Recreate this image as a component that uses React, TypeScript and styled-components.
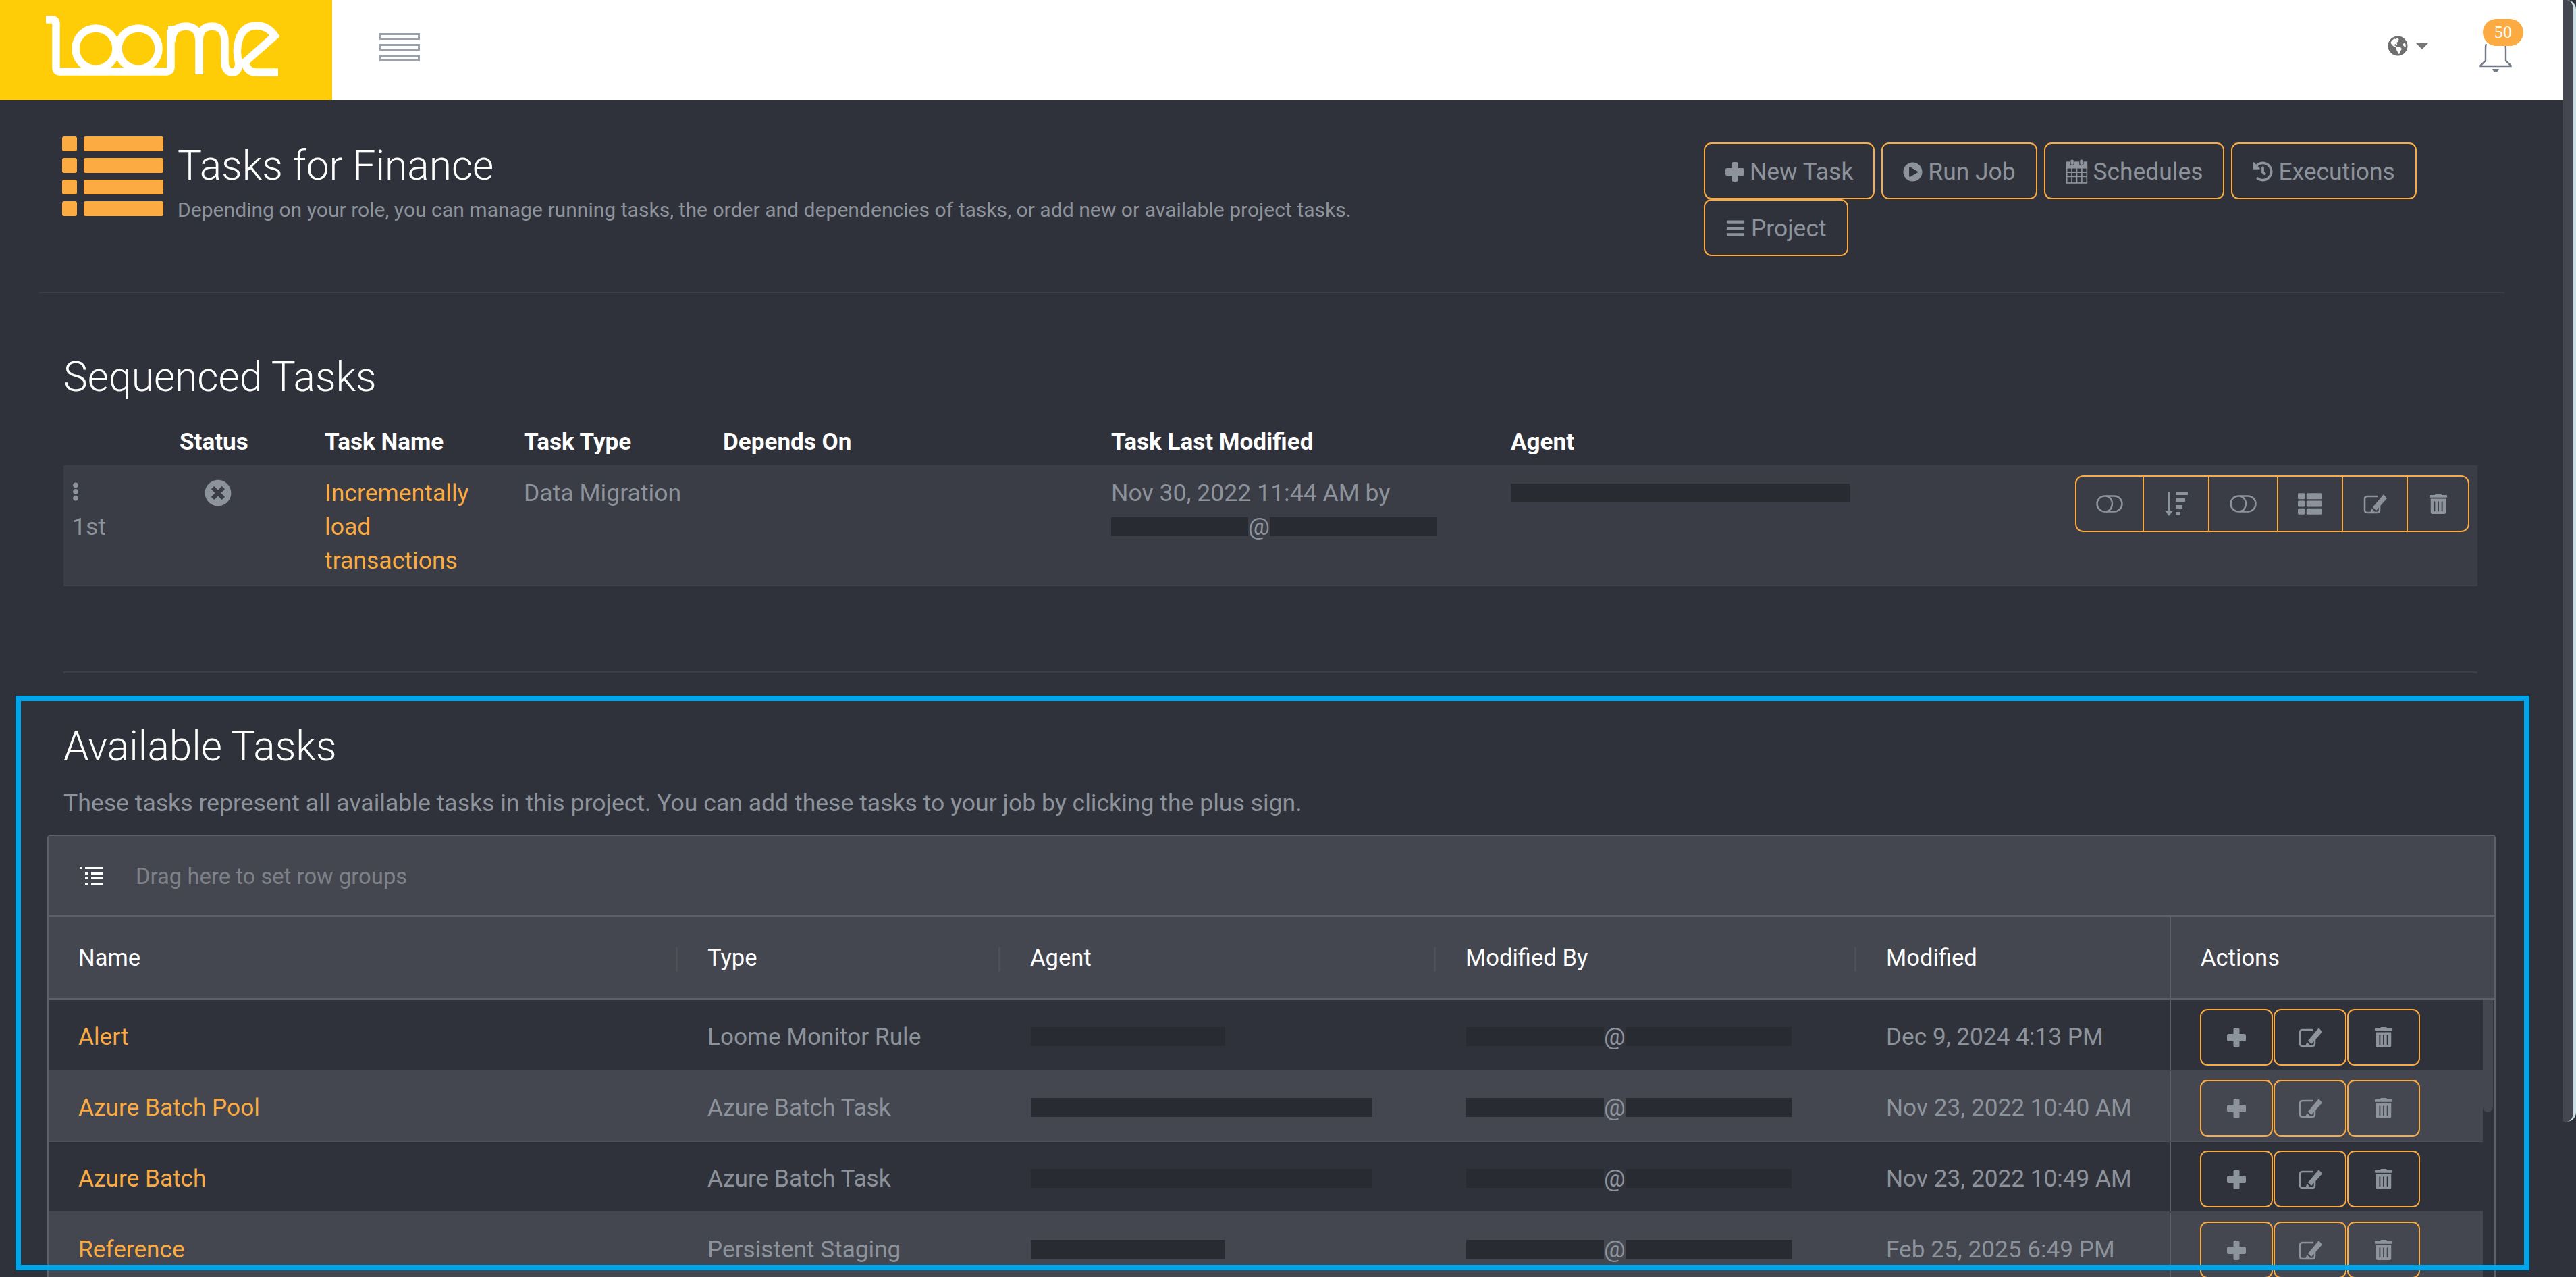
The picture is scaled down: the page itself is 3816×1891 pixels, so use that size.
import React from 'react'
import styled, { createGlobalStyle } from 'styled-components'
import {
  FaPlayCircle,
  FaHistory,
  FaBars,
  FaTimesCircle,
  FaEllipsisV,
  FaThList,
  FaTrashAlt,
  FaGlobeAmericas,
} from 'react-icons/fa'

const orange = '#fbab42'
const muted = '#8d939b'
const bg = '#30323b'
const stripe = '#444650'
const line = '#5e5f68'
const redacted = '#292b33'

const GlobalStyle = createGlobalStyle`
  html, body {
    margin: 0;
    background: ${bg};
    font-family: Roboto, "Liberation Sans", sans-serif;
    overflow: hidden;
  }
  * { box-sizing: border-box; }
`

const Page = styled.div`
  position: relative;
  display: flex;
  width: 3816px;
  height: 1891px;
  overflow: hidden;
  background: ${bg};
`
const Main = styled.div`
  width: 3797px;
  flex: none;
`
const PageScroll = styled.div`
  width: 19px;
  height: 1661px;
  flex: none;
  background: #444650;
  border-radius: 0 14px 14px 0;
  border-right: 4px solid #c9dfe4;
`
const TopBar = styled.header`
  display: flex;
  align-items: center;
  height: 148px;
  background: #fff;
  padding-right: 76px;
`
const Brand = styled.div`
  width: 492px;
  height: 148px;
  background: #ffcd07;
`
const MenuToggle = styled.svg`
  width: 60px;
  height: 42px;
  margin: -8px 0 0 70px;
`
const TopRight = styled.div`
  display: flex;
  align-items: center;
  margin-left: auto;
`
const GlobeMenu = styled.div`
  display: flex;
  align-items: center;
  gap: 11px;
  color: #6f6f6f;
  font-size: 30px;
  margin-top: -12px;
  svg { display: block; }
`
const Caret = styled.span`
  width: 0;
  height: 0;
  border-left: 10px solid transparent;
  border-right: 10px solid transparent;
  border-top: 10px solid #777;
`
const BellWrap = styled.div`
  position: relative;
  width: 48px;
  height: 48px;
  margin: 20px 0 0 75px;
`
const Badge = styled.span`
  position: absolute;
  left: 5px;
  top: -32px;
  width: 60px;
  height: 40px;
  border-radius: 20px;
  background: ${orange};
  color: #fff;
  font: 26px/40px "Liberation Serif", serif;
  text-align: center;
`

const HeadRow = styled.div`
  display: grid;
  grid-template-columns: 2433px 1110px;
  height: 284px;
  padding: 54px 0 0 92px;
`
const HeadLeft = styled.div`
  display: flex;
  gap: 21px;
`
const HeadIcon = styled.svg`
  width: 150px;
  height: 118px;
  flex: none;
`
const HeadText = styled.div`
  padding-top: 9px;
`
const Title = styled.h1`
  margin: 0;
  font-size: 60.4px;
  line-height: 70px;
  font-weight: 300;
  color: #fff;
`
const Subtitle = styled.p`
  margin: 10px 0 0;
  font-size: 30.1px;
  line-height: 40px;
  font-weight: 400;
  color: ${muted};
  white-space: nowrap;
`
const HeadButtons = styled.div`
  display: flex;
  flex-wrap: wrap;
  align-content: flex-start;
  column-gap: 10px;
  padding-top: 9px;
  margin-left: -1px;
`
const OutlineButton = styled.button`
  display: inline-flex;
  align-items: center;
  gap: 8px;
  height: 84px;
  padding: 2px 30px 0;
  background: transparent;
  border: 2px solid ${orange};
  border-radius: 11px;
  color: ${muted};
  font-family: inherit;
  font-size: 35.4px;
`
const Rule = styled.hr<{ $left: number; $right: number; $h: number }>`
  height: ${(p) => p.$h}px;
  margin: 0 ${(p) => p.$right}px 0 ${(p) => p.$left}px;
  border: 0;
  background: #3c3e48;
`

const SeqSection = styled.section`
  padding: 90px 127px 0 94px;
  height: 560px;
`
const SectionTitle = styled.h2`
  margin: 0;
  font-size: 60.4px;
  line-height: 70px;
  font-weight: 300;
  color: #fff;
`
const SeqHeader = styled.div`
  display: grid;
  grid-template-columns: 172px 215px 295px 295px 575px 592px 510px;
  height: 60px;
  margin-top: 35px;
  font-size: 35.1px;
  line-height: 50px;
  font-weight: 700;
  color: #fff;
`
const SeqRow = styled.div`
  display: grid;
  grid-template-columns: 172px 215px 295px 295px 575px 592px 510px 1fr;
  height: 179px;
  padding-top: 16px;
  background: #3a3c46;
  border-bottom: 2px solid #3f414c;
  font-size: 35.6px;
  line-height: 50px;
  color: ${muted};
`
const OrderCell = styled.div`
  padding-left: 13px;
`
const DragDots = styled.div`
  height: 50px;
  font-size: 28px;
  padding-top: 9px;
  margin-left: -9px;
  svg { display: block; }
`
const StatusCell = styled.div`
  margin-left: 37px;
  font-size: 40px;
  svg { display: block; margin-top: 5px; }
`
const TaskLink = styled.a`
  color: ${orange};
`
const Bar = styled.span<{ $w: number }>`
  display: inline-block;
  width: ${(p) => p.$w}px;
  height: 28px;
  vertical-align: -2px;
  background: ${redacted};
`
const GroupCell = styled.div`
  display: flex;
  justify-content: flex-end;
  padding-right: 12px;
  margin-top: -1px;
  align-items: flex-start;
`
const ButtonGroup = styled.div`
  display: flex;
  height: 84px;
  border: 2px solid ${orange};
  border-radius: 12px;
`
const GroupItem = styled.div<{ $w: number }>`
  display: flex;
  align-items: center;
  justify-content: center;
  width: ${(p) => p.$w}px;
  color: ${muted};
  border-right: 2px solid ${orange};
  &:last-child { border-right: 0; }
`

const AvailableSection = styled.section`
  padding: 74px 100px 0 94px;
`
const Description = styled.p`
  margin: 23px 0 0;
  font-size: 35.6px;
  line-height: 50px;
  color: ${muted};
`
const Grid = styled.div`
  width: 3627px;
  margin: 22px 0 0 -24px;
  border: 2px solid ${line};
  border-bottom: 0;
  border-radius: 5px 5px 0 0;
`
const GroupPanel = styled.div`
  display: flex;
  align-items: center;
  gap: 49px;
  height: 120px;
  padding-left: 46px;
  background: ${stripe};
  border-bottom: 3px solid ${line};
  color: #7e8188;
  font-size: 32.8px;
`
const PanelLabel = styled.span`
  padding-top: 2px;
`
const gridColumns = '932px 478px 645px 623px 464px 464px'
const GridHeader = styled.div`
  display: grid;
  grid-template-columns: ${gridColumns};
  height: 123px;
  background: ${stripe};
  border-bottom: 3px solid ${line};
  color: #fff;
  font-size: 34.6px;
`
const HeaderCell = styled.div`
  display: flex;
  align-items: center;
  justify-content: space-between;
  padding-left: 44px;
`
const HeaderSep = styled.span`
  width: 3px;
  height: 36px;
  margin-top: 6px;
  background: #4f4f58;
`
const ActionsHeader = styled(HeaderCell)`
  border-left: 2px solid ${line};
  justify-content: flex-start;
`
const GridBody = styled.div`
  display: flex;
`
const Rows = styled.div`
  width: 3606px;
  flex: none;
`
const GridRow = styled.div<{ $even: boolean }>`
  display: grid;
  grid-template-columns: ${gridColumns};
  height: 105px;
  background: ${(p) => (p.$even ? stripe : bg)};
  border-bottom: 2px solid ${(p) => (p.$even ? '#4d4e57' : stripe)};
  font-size: 35.2px;
  color: ${muted};
`
const GridCell = styled.div`
  display: flex;
  align-items: center;
  padding: 5px 0 0 44px;
  white-space: nowrap;
`
const BarCell = styled(GridCell)`
  padding-left: 45px;
`
const ActionsCell = styled.div`
  display: flex;
  gap: 1px;
  padding: 13px 0 0 43px;
  border-left: 2px solid ${line};
`
const RowButton = styled.div`
  display: flex;
  align-items: center;
  justify-content: center;
  width: 108px;
  height: 84px;
  border: 2px solid ${orange};
  border-radius: 11px;
  color: ${muted};
`
const GridScrollTrack = styled.div`
  width: 17px;
`
const GridScrollThumb = styled.div`
  width: 15px;
  height: 166px;
  border-radius: 0 0 8px 8px;
  background: ${stripe};
`
const Highlight = styled.div`
  position: absolute;
  left: 23px;
  top: 1030px;
  width: 3724px;
  height: 851px;
  border: 8px solid #02a5ea;
  pointer-events: none;
`

const Logo = () => (
  <svg width="492" height="148" viewBox="0 0 492 148">
    <g fill="none" stroke="#fff" strokeWidth="11.5">
      <circle cx="142" cy="72" r="30" />
      <circle cx="205" cy="72" r="30" />
      <path d="M68 29 H77 Q83 29 83 35 V100 Q83 106 89 106 H246 Q253 106 253 99 V44 M249 44 H258" />
      <path d="M254 62 Q255 39 275 39 Q295 39 295 62 V110 M295 62 Q295 39 314 39 Q333 39 333 62 V90 Q333 107 344 107 Q353 107 354 94 Q350 80 352 68 Q356 38 380 38 Q397 38 407 53 L363 92 Q366 107 380 107 H412" />
    </g>
  </svg>
)

const PlusIcon = () => (
  <svg width="28" height="29" viewBox="0 0 28 29" fill={muted}>
    <rect x="9.5" y="0" width="9" height="29" rx="2.5" />
    <rect x="0" y="9" width="28" height="11" rx="2.5" />
  </svg>
)

const EditIcon = () => (
  <svg width="35" height="29" viewBox="0 0 35 29" fill="none">
    <path d="M22 3 H6 Q2 3 2 7 V23 Q2 27 6 27 H20 Q24 27 24 23 V16" stroke={muted} strokeWidth="2.6" />
    <path d="M30 0 L35 6 L19 24 L14 19 Z M12.5 21 L17 25.5 L10 27 Z" fill={muted} />
  </svg>
)

const Toggle = () => (
  <svg width="40" height="26" viewBox="0 0 40 26" fill="none" stroke={muted} strokeWidth="2.5">
    <rect x="1.5" y="1.5" width="37" height="23" rx="11.5" />
    <path d="M15 1.5 C 27 4, 27 22, 15 24.5" />
  </svg>
)

const SortDown = () => (
  <svg width="34" height="36" viewBox="0 0 34 36" fill={muted}>
    <rect x="4" y="0" width="4" height="30" />
    <path d="M0 28 H12 L6 36 Z" />
    <rect x="16" y="0" width="18" height="5" />
    <rect x="16" y="10" width="14" height="5" />
    <rect x="16" y="20" width="10" height="5" />
    <rect x="16" y="30" width="7" height="5" />
  </svg>
)

const CalendarIcon = () => (
  <svg width="33" height="36" viewBox="0 0 30 34" fill="none" stroke={muted} strokeWidth="1.6">
    <rect x="1" y="9" width="28" height="24" />
    <rect x="1" y="4" width="28" height="8" fill={muted} />
    <rect x="6" y="0" width="5" height="8" rx="2" fill={muted} stroke={bg} strokeWidth="1" />
    <rect x="19" y="0" width="5" height="8" rx="2" fill={muted} stroke={bg} strokeWidth="1" />
    <path d="M8 12 V33 M15 12 V33 M22 12 V33 M1 18 H29 M1 24 H29" />
  </svg>
)

const BellIcon = () => (
  <svg width="48" height="48" viewBox="0 0 48 48" fill="none">
    <path d="M10 5 C 9 7, 9 9, 9 12 V30 L1.5 37 V38 H46.5 V37 L39 30 V12 Q39 8 38 5" stroke="#717a85" strokeWidth="2.4" />
    <path d="M19 42 H29 Q27 47 24 47 Q21 47 19 42 Z" fill="#717a85" />
  </svg>
)

const headButtons = [
  { label: 'New Task', icon: <PlusIcon /> },
  { label: 'Run Job', icon: <FaPlayCircle size={29} /> },
  { label: 'Schedules', icon: <CalendarIcon /> },
  { label: 'Executions', icon: <FaHistory size={30} /> },
  { label: 'Project', icon: <FaBars size={30} /> },
]

const available = [
  { name: 'Alert', type: 'Loome Monitor Rule', agent: 288, left: 204, right: 246, modified: 'Dec 9, 2024 4:13 PM' },
  { name: 'Azure Batch Pool', type: 'Azure Batch Task', agent: 506, left: 204, right: 246, modified: 'Nov 23, 2022 10:40 AM' },
  { name: 'Azure Batch', type: 'Azure Batch Task', agent: 505, left: 204, right: 246, modified: 'Nov 23, 2022 10:49 AM' },
  { name: 'Reference', type: 'Persistent Staging', agent: 287, left: 204, right: 246, modified: 'Feb 25, 2025 6:49 PM' },
]

const App = () => (
  <Page>
    <GlobalStyle />
    <Main>
      <TopBar>
        <Brand><Logo /></Brand>
        <MenuToggle viewBox="0 0 60 42" fill="none" stroke="#9aa1aa" strokeWidth="3">
          <rect x="1.5" y="1.5" width="57" height="7" />
          <rect x="1.5" y="17.5" width="57" height="7" />
          <rect x="1.5" y="33.5" width="57" height="7" />
        </MenuToggle>
        <TopRight>
          <GlobeMenu>
            <FaGlobeAmericas />
            <Caret />
          </GlobeMenu>
          <BellWrap>
            <BellIcon />
            <Badge>50</Badge>
          </BellWrap>
        </TopRight>
      </TopBar>

      <HeadRow>
        <HeadLeft>
          <HeadIcon viewBox="0 0 150 118" fill={orange}>
            {[0, 32, 64, 96].map((y) => (
              <g key={y}>
                <rect x="0" y={y} width="22" height="22" rx="3" />
                <rect x="32" y={y} width="118" height="22" rx="3" />
              </g>
            ))}
          </HeadIcon>
          <HeadText>
            <Title>Tasks for Finance</Title>
            <Subtitle>
              Depending on your role, you can manage running tasks, the order and dependencies of tasks, or add new or available project tasks.
            </Subtitle>
          </HeadText>
        </HeadLeft>
        <HeadButtons>
          {headButtons.map((b) => (
            <OutlineButton key={b.label}>
              {b.icon}
              {b.label}
            </OutlineButton>
          ))}
        </HeadButtons>
      </HeadRow>
      <Rule $left={58} $right={87} $h={2} />

      <SeqSection>
        <SectionTitle>Sequenced Tasks</SectionTitle>
        <SeqHeader>
          <div />
          <div>Status</div>
          <div>Task Name</div>
          <div>Task Type</div>
          <div>Depends On</div>
          <div>Task Last Modified</div>
          <div>Agent</div>
        </SeqHeader>
        <SeqRow>
          <OrderCell>
            <DragDots><FaEllipsisV /></DragDots>
            1st
          </OrderCell>
          <StatusCell><FaTimesCircle /></StatusCell>
          <div><TaskLink>Incrementally<br />load<br />transactions</TaskLink></div>
          <div>Data Migration</div>
          <div />
          <div>
            Nov 30, 2022 11:44 AM by<br />
            <Bar $w={203} />@<Bar $w={247} />
          </div>
          <div><Bar $w={502} /></div>
          <GroupCell>
            <ButtonGroup>
              <GroupItem $w={100}><Toggle /></GroupItem>
              <GroupItem $w={97}><SortDown /></GroupItem>
              <GroupItem $w={102}><Toggle /></GroupItem>
              <GroupItem $w={96}><FaThList size={36} /></GroupItem>
              <GroupItem $w={96}><EditIcon /></GroupItem>
              <GroupItem $w={89}><FaTrashAlt size={30} /></GroupItem>
            </ButtonGroup>
          </GroupCell>
        </SeqRow>
      </SeqSection>
      <Rule $left={94} $right={127} $h={3} />

      <AvailableSection>
        <SectionTitle>Available Tasks</SectionTitle>
        <Description>
          These tasks represent all available tasks in this project. You can add these tasks to your job by clicking the plus sign.
        </Description>
        <Grid>
          <GroupPanel>
            <svg width="34" height="26" viewBox="0 0 34 26" fill="#fff">
              <rect x="0" y="0" width="4" height="3" />
              <rect x="8" y="0" width="26" height="3" />
              <rect x="8" y="8" width="5" height="3" />
              <rect x="17" y="8" width="17" height="3" />
              <rect x="8" y="15" width="5" height="3" />
              <rect x="17" y="15" width="17" height="3" />
              <rect x="8" y="23" width="5" height="3" />
              <rect x="17" y="23" width="17" height="3" />
            </svg>
            <PanelLabel>Drag here to set row groups</PanelLabel>
          </GroupPanel>
          <GridHeader>
            {['Name', 'Type', 'Agent', 'Modified By'].map((h) => (
              <HeaderCell key={h}>{h}<HeaderSep /></HeaderCell>
            ))}
            <HeaderCell>Modified</HeaderCell>
            <ActionsHeader>Actions</ActionsHeader>
          </GridHeader>
          <GridBody>
            <Rows>
              {available.map((row, index) => (
                <GridRow key={`row_${index}`} $even={index % 2 === 1}>
                  <GridCell><TaskLink>{row.name}</TaskLink></GridCell>
                  <GridCell>{row.type}</GridCell>
                  <BarCell><Bar $w={row.agent} /></BarCell>
                  <BarCell><Bar $w={row.left} />@<Bar $w={row.right} /></BarCell>
                  <GridCell>{row.modified}</GridCell>
                  <ActionsCell>
                    <RowButton><PlusIcon /></RowButton>
                    <RowButton><EditIcon /></RowButton>
                    <RowButton><FaTrashAlt size={30} /></RowButton>
                  </ActionsCell>
                </GridRow>
              ))}
            </Rows>
            <GridScrollTrack><GridScrollThumb /></GridScrollTrack>
          </GridBody>
        </Grid>
      </AvailableSection>
    </Main>
    <PageScroll />
    <Highlight />
  </Page>
)

export default App
